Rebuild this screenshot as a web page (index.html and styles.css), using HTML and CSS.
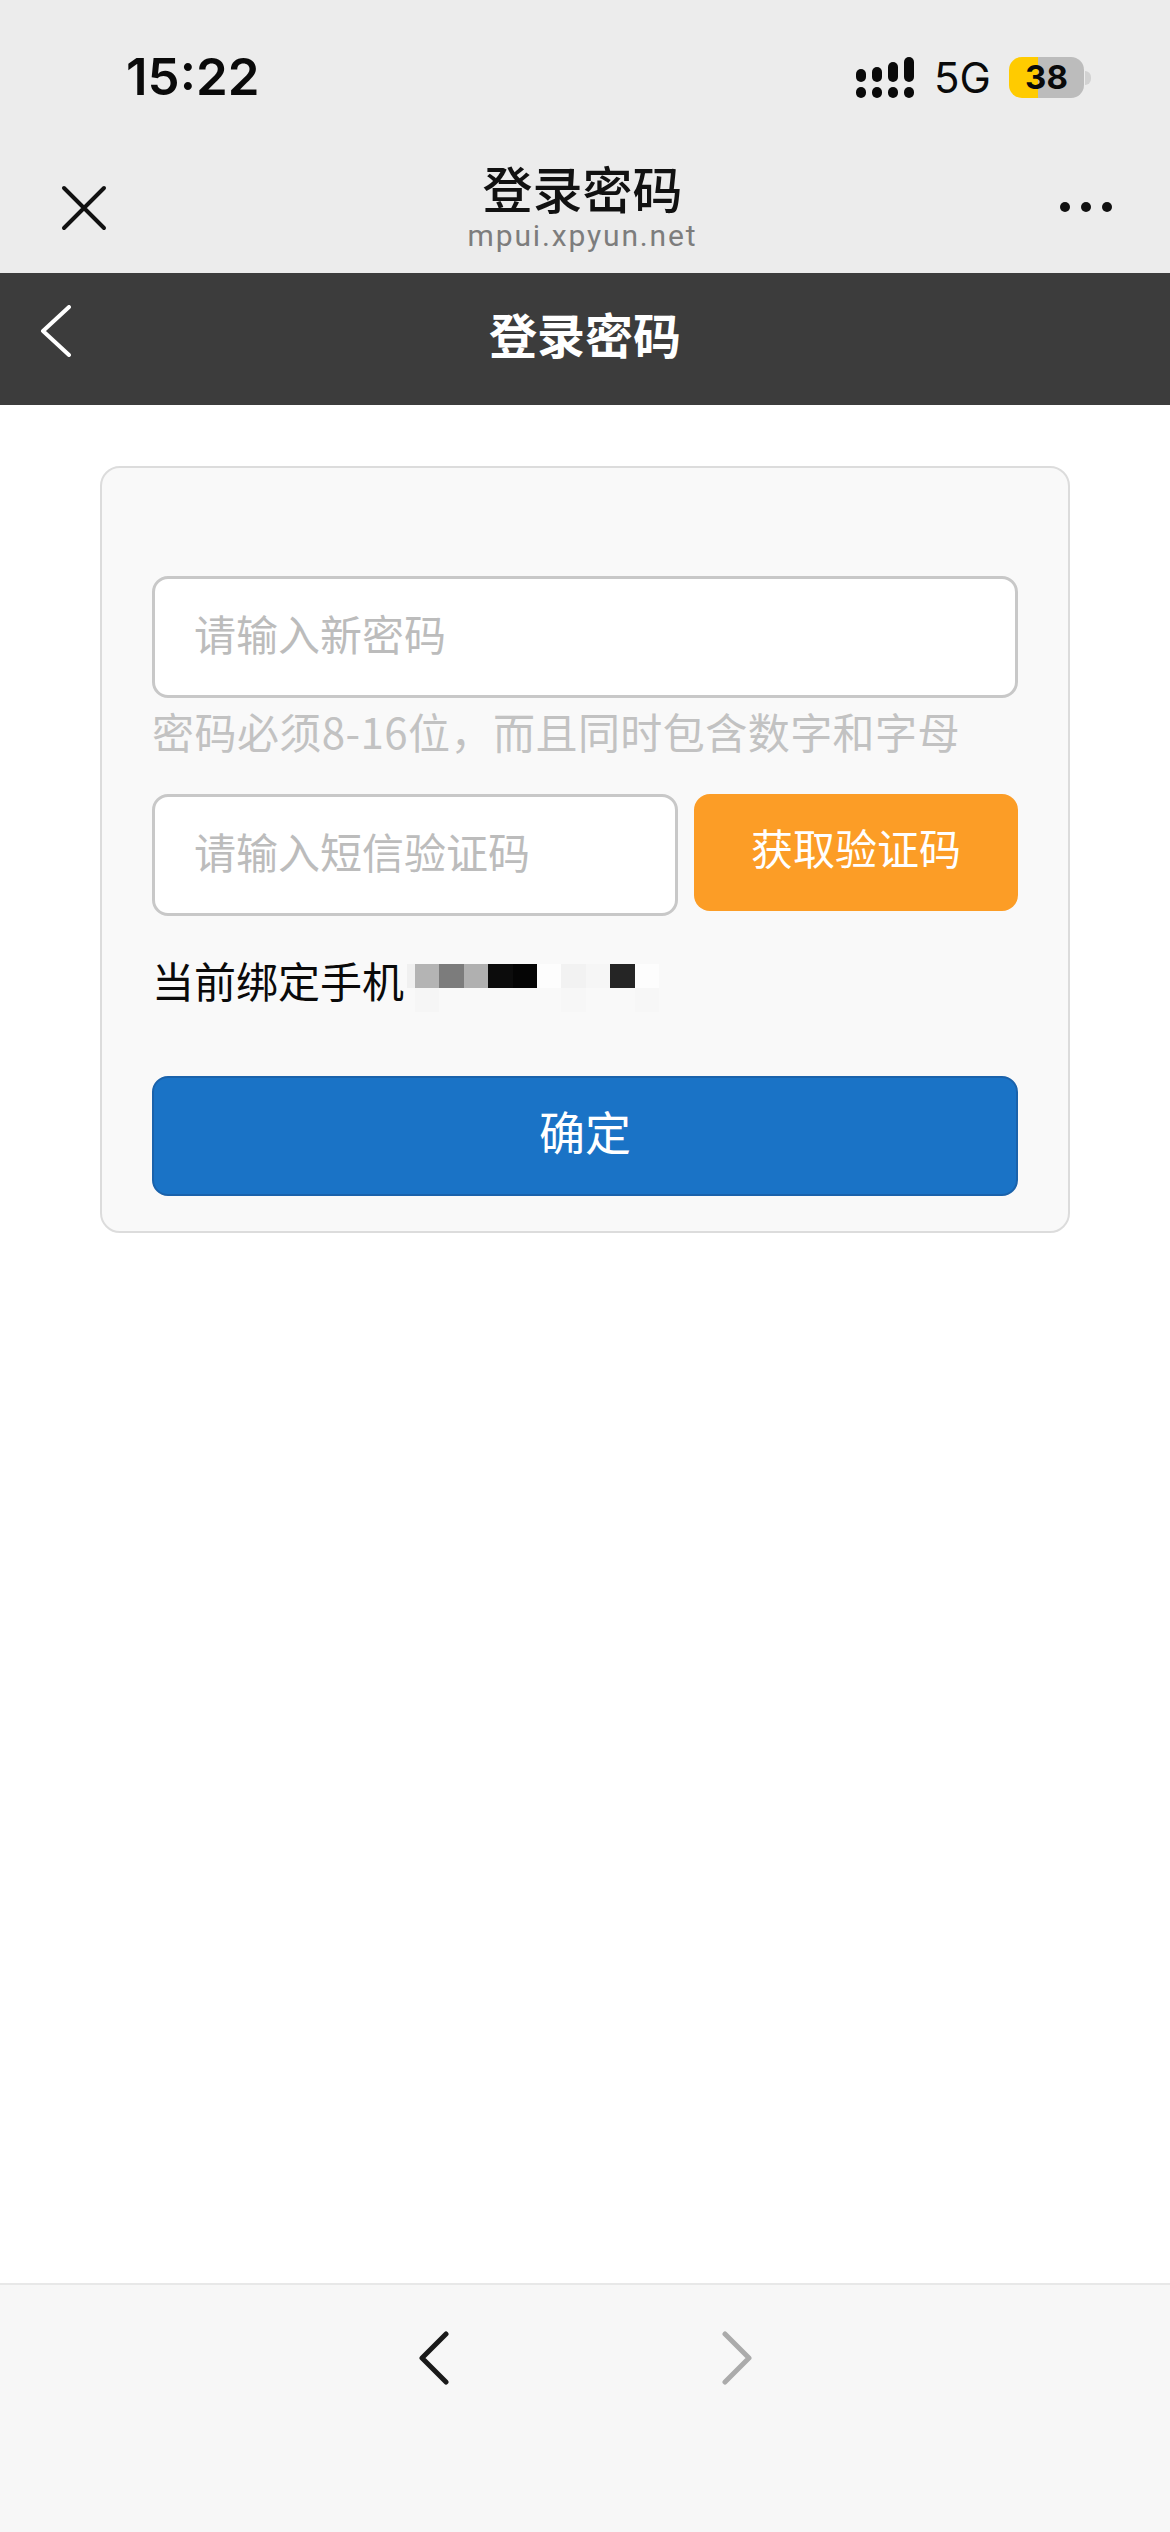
FILE: index.html
```html
<!DOCTYPE html>
<html lang="zh-CN">
<head>
<meta charset="utf-8">
<title>登录密码</title>
<link rel="stylesheet" href="styles.css">
</head>
<body>
<div class="page">
  <header class="top">
    <div class="status">
      <span class="time">15:22</span>
      <div class="status-right">
        <svg class="signal" width="74" height="42" viewBox="0 0 74 42" aria-hidden="true">
          <rect x="0" y="12" width="10" height="13" rx="5"/><rect x="16" y="10" width="10" height="15" rx="5"/><rect x="32" y="5" width="10" height="20" rx="5"/><rect x="48" y="0" width="10" height="25" rx="5"/>
          <rect x="0" y="30" width="10" height="11" rx="5"/><rect x="16" y="30" width="10" height="11" rx="5"/><rect x="32" y="30" width="10" height="11" rx="5"/><rect x="48" y="30" width="10" height="11" rx="5"/>
        </svg>
        <span class="net">5G</span>
        <div class="battery"><span class="battery-num">38</span></div>
        <span class="battery-nub"></span>
      </div>
    </div>
    <div class="wx-nav">
      <div class="wx-left">
        <svg width="46" height="46" viewBox="0 0 46 46" aria-hidden="true"><path d="M3 3 L43 43 M43 3 L3 43" fill="none" stroke="#111" stroke-width="4" stroke-linecap="round"/></svg>
      </div>
      <div class="wx-title">
        <div class="wx-name">登录密码</div>
        <div class="wx-url">mpui.xpyun.net</div>
      </div>
      <div class="wx-right">
        <span class="dot"></span><span class="dot"></span><span class="dot"></span>
      </div>
    </div>
  </header>

  <div class="appbar">
    <svg class="appbar-back" width="32" height="52" viewBox="0 0 32 52" aria-hidden="true"><path d="M29 2 L3 26 L29 50" fill="none" stroke="#fff" stroke-width="4" stroke-linecap="round" stroke-linejoin="round"/></svg>
    <h1 class="appbar-title">登录密码</h1>
  </div>

  <main class="main">
    <form class="card">
      <input class="field" type="text" placeholder="请输入新密码">
      <p class="hint">密码必须8-16位，而且同时包含数字和字母</p>
      <div class="code-row">
        <input class="field field-code" type="text" placeholder="请输入短信验证码">
        <button class="btn-code" type="button">获取验证码</button>
      </div>
      <div class="phone-row">
        <span class="phone-label">当前绑定手机</span>
        <div class="mosaic" aria-hidden="true">
          <i class="c0"></i><i class="c1"></i><i class="c2"></i><i class="c3"></i><i class="c4"></i><i class="c5"></i><i class="c6"></i><i class="c7"></i><i class="c8"></i><i class="c9"></i><i class="c6"></i>
          <i class="f0"></i><i class="f1"></i><i class="f0"></i><i class="f0"></i><i class="f0"></i><i class="f0"></i><i class="f0"></i><i class="f2"></i><i class="f0"></i><i class="f0"></i><i class="f2"></i>
        </div>
      </div>
      <button class="btn-ok" type="button">确定</button>
    </form>
  </main>

  <footer class="bottom">
    <svg width="30" height="54" viewBox="0 0 30 54" aria-hidden="true"><path d="M27 3 L3 27 L27 51" fill="none" stroke="#1a1a1a" stroke-width="5" stroke-linecap="round" stroke-linejoin="round"/></svg>
    <svg width="30" height="54" viewBox="0 0 30 54" aria-hidden="true"><path d="M3 3 L27 27 L3 51" fill="none" stroke="#ababab" stroke-width="5" stroke-linecap="round" stroke-linejoin="round"/></svg>
  </footer>
</div>
</body>
</html>
```
FILE: styles.css
```css
* { box-sizing: border-box; }
html, body { margin: 0; padding: 0; background: #fff; }
body { font-family: "Noto Sans CJK SC", "Noto Sans", sans-serif; }
.page { width: 1170px; height: 2532px; display: flex; flex-direction: column; overflow: hidden; }

.top { height: 273px; background: #ececec; display: flex; flex-direction: column; flex: none; }
.status { height: 150px; padding: 55px 79px 0 126px; display: flex; justify-content: space-between; align-items: flex-start; }
.time { font: 600 51px/44px Inter, sans-serif; color: #0a0a0a; }
.status-right { display: flex; align-items: flex-start; padding-top: 2px; }
.signal { fill: #0a0a0a; margin-right: 4px; display: block; }
.net { font: 400 42px/41px Inter, sans-serif; color: #0a0a0a; width: 75px; }
.battery { width: 75px; height: 41px; border-radius: 13px; background: linear-gradient(to right, #ffcb00 0 29px, #bcbcbc 29px); display: flex; align-items: center; justify-content: center; }
.battery-num { font: 700 33px/41px Inter, sans-serif; color: #0a0a0a; }
.battery-nub { width: 6px; height: 14px; margin: 14px 0 0 1px; background: #d2d2d2; border-radius: 0 7px 7px 0; }

.wx-nav { flex: 1; display: grid; grid-template-columns: 1fr auto 1fr; align-items: start; padding: 0 58px 0 53px; }
.wx-left { padding: 35px 0 0 8px; }
.wx-left svg { display: block; }
.wx-title { text-align: center; }
.wx-name { font-size: 50px; line-height: 56px; font-weight: 500; color: #111; margin-top: 9px; }
.wx-url { font: 400 30px/34px Roboto, sans-serif; letter-spacing: 1.85px; color: #7d7d7d; margin-top: 4px; }
.wx-right { display: flex; gap: 11px; justify-content: flex-end; padding-top: 52px; }
.dot { width: 10px; height: 10px; border-radius: 50%; background: #111; }

.appbar { height: 132px; background: #3c3c3c; flex: none; display: flex; justify-content: center; position: relative; }
.appbar-back { position: absolute; left: 40px; top: 32px; }
.appbar-title { margin: 27px 0 0; font-size: 48px; line-height: 66px; font-weight: 700; color: #fff; }

.main { flex: 1; padding: 61px 100px 0; }
.card { height: 767px; background: #f9f9f9; border: 2px solid #dcdcdc; border-radius: 20px; padding: 108px 50px 0; display: flex; flex-direction: column; align-items: stretch; }
.field { display: block; width: 100%; height: 122px; background: #fff; border: 3px solid #c8c8c8; border-radius: 16px; padding: 0 39px 10px; font: 400 42px "Noto Sans CJK SC", sans-serif; outline: none; }
.field::placeholder { color: #bcbcbc; opacity: 1; }
.hint { margin: 3px 0 0; height: 93px; font-size: 42px; line-height: 60px; letter-spacing: 0.45px; color: #c2c2c2; white-space: nowrap; }
.code-row { display: flex; gap: 16px; align-items: flex-start; }
.field-code { width: 526px; flex: none; }
.btn-code { width: 324px; height: 117px; border: 0; border-radius: 16px; background: #fc9d26; color: #fff; font: 400 42px "Noto Sans CJK SC", sans-serif; padding: 0 0 12px; }
.phone-row { display: flex; align-items: flex-start; margin-top: 34px; height: 126px; }
.phone-label { font-size: 42px; line-height: 60px; color: #0a0a0a; }
.mosaic { display: grid; grid-template-columns: 8px repeat(10, 24.4px); grid-auto-rows: 24px; margin: 14px 0 0 3px; }
.c0 { background: #f0f0f0; } .c1 { background: #b4b4b4; } .c2 { background: #7c7c7c; } .c3 { background: #b0b0b0; }
.c4 { background: #0c0c0c; } .c5 { background: #050505; } .c6 { background: #fdfdfd; } .c7 { background: #f2f2f2; }
.c8 { background: #f6f6f6; } .c9 { background: #252525; }
.f0 { background: transparent; } .f1 { background: #f6f6f6; } .f2 { background: #f7f7f7; }
.btn-ok { width: 100%; height: 120px; border: 2px solid #1a62ab; border-radius: 16px; background: #1a73c6; color: #fff; font: 400 46px "Noto Sans CJK SC", sans-serif; padding: 0 0 12px; }

.bottom { height: 249px; flex: none; background: #f7f7f7; border-top: 2px solid #e8e8e8; display: flex; justify-content: center; gap: 273px; padding-top: 46px; align-items: flex-start; }
.bottom svg { display: block; }
```
